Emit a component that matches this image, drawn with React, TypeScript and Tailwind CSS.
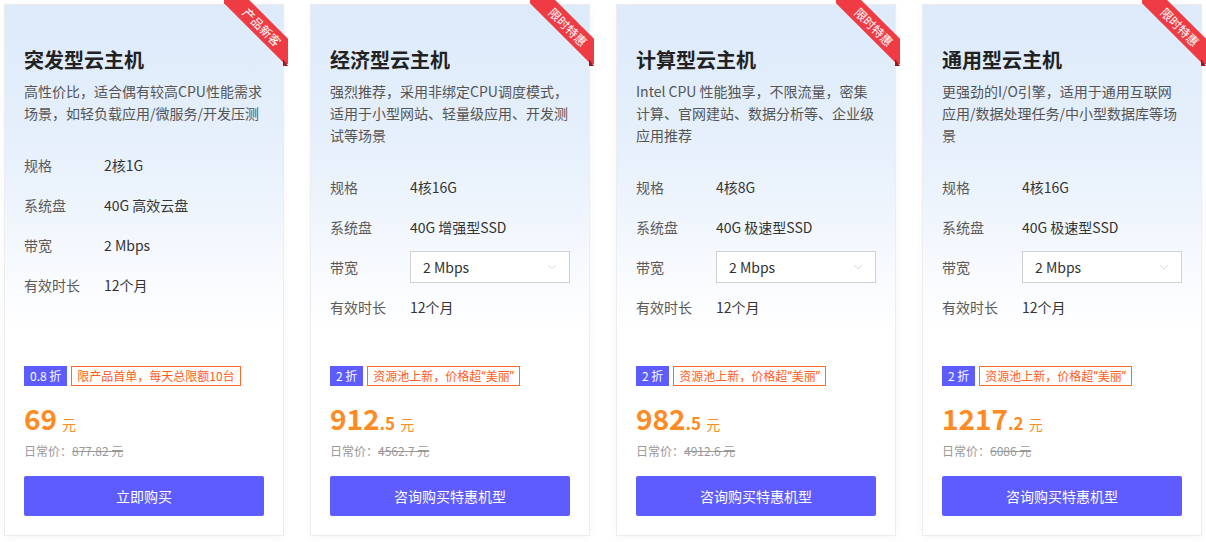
import React from "react";
import { ChevronDown } from "lucide-react";

type Card = {
  title: string;
  ribbon: string;
  desc: string[];
  spec: string;
  disk: string;
  select: boolean;
  discount: string;
  tag: React.ReactNode;
  priceInt: string;
  priceDec?: string;
  orig: string;
  btn: string;
};

const Q = ({ c }: { c: string }) => (
  <span style={{ fontFamily: '"Noto Sans", sans-serif' }}>{c}</span>
);

const poolTag = (
  <>
    资源池上新，价格超<Q c="“" />美丽<Q c="”" />
  </>
);

const cards: Card[] = [
  {
    title: "突发型云主机",
    ribbon: "产品新客",
    desc: ["高性价比，适合偶有较高CPU性能需求", "场景，如轻负载应用/微服务/开发压测"],
    spec: "2核1G",
    disk: "40G 高效云盘",
    select: false,
    discount: "0.8 折",
    tag: "限产品首单，每天总限额10台",
    priceInt: "69",
    orig: "877.82 元",
    btn: "立即购买",
  },
  {
    title: "经济型云主机",
    ribbon: "限时特惠",
    desc: ["强烈推荐，采用非绑定CPU调度模式，", "适用于小型网站、轻量级应用、开发测", "试等场景"],
    spec: "4核16G",
    disk: "40G 增强型SSD",
    select: true,
    discount: "2 折",
    tag: poolTag,
    priceInt: "912",
    priceDec: ".5",
    orig: "4562.7 元",
    btn: "咨询购买特惠机型",
  },
  {
    title: "计算型云主机",
    ribbon: "限时特惠",
    desc: ["Intel CPU 性能独享，不限流量，密集", "计算、官网建站、数据分析等、企业级", "应用推荐"],
    spec: "4核8G",
    disk: "40G 极速型SSD",
    select: true,
    discount: "2 折",
    tag: poolTag,
    priceInt: "982",
    priceDec: ".5",
    orig: "4912.6 元",
    btn: "咨询购买特惠机型",
  },
  {
    title: "通用型云主机",
    ribbon: "限时特惠",
    desc: ["更强劲的I/O引擎，适用于通用互联网", "应用/数据处理任务/中小型数据库等场", "景"],
    spec: "4核16G",
    disk: "40G 极速型SSD",
    select: true,
    discount: "2 折",
    tag: poolTag,
    priceInt: "1217",
    priceDec: ".2",
    orig: "6086 元",
    btn: "咨询购买特惠机型",
  },
];

function Row({ label, children }: { label: string; children: React.ReactNode }) {
  return (
    <div className="flex h-[40px] items-center">
      <div className="w-[80px] shrink-0 text-[14px] text-[#5a5a5a]">{label}</div>
      <div className="text-[14px] text-[#333]">{children}</div>
    </div>
  );
}

function Ribbon({ text }: { text: string }) {
  return (
    <>
      <div className="absolute right-[-5px] top-[-5px] h-[64px] w-[64px] overflow-hidden">
        <div className="absolute left-[-14px] top-[17px] flex h-[20px] w-[104px] rotate-45 items-center justify-center bg-[#ee3b44] text-[12px] leading-none text-white">
          {text}
        </div>
      </div>
      <div className="absolute right-[-5px] top-[54px] h-[7px] w-[5px] bg-[#a01a21] [clip-path:polygon(0_0,100%_100%,0_100%)]" />
    </>
  );
}

function PriceCard({ c }: { c: Card }) {
  return (
    <div className="relative flex h-[532px] w-[280px] shrink-0 flex-col border border-[#ededed] bg-[linear-gradient(180deg,#dceafa_0%,#e8f1fc_30%,#f6f9fe_48%,#ffffff_62%)] px-[19px] pt-[41px] pb-[19px] shadow-[0_2px_8px_rgba(0,0,0,0.04)]">
      <Ribbon text={c.ribbon} />
      <div className="text-[20px] font-bold leading-[28px] text-[#222]">{c.title}</div>
      <div className="mt-[6px] text-[14px] leading-[22px] text-[#555]">
        {c.desc.map((l, i) => (
          <div key={i} className="whitespace-nowrap">
            {l}
          </div>
        ))}
      </div>
      <div className="mt-[21px]">
        <Row label="规格">{c.spec}</Row>
        <Row label="系统盘">{c.disk}</Row>
        <Row label="带宽">
          {c.select ? (
            <div className="flex h-[32px] w-[160px] items-center justify-between border border-[#d0d0d0] bg-white pl-[12px] pr-[10px] text-[14px] text-[#333]">
              <span>2 Mbps</span>
              <ChevronDown size={14} strokeWidth={1.2} className="text-[#c0c0c0]" />
            </div>
          ) : (
            "2 Mbps"
          )}
        </Row>
        <Row label="有效时长">12个月</Row>
      </div>
      <div className="mt-auto">
        <div className="flex items-center gap-[4px]">
          <span className="flex h-[20px] items-center bg-[#5c5cff] px-[6px] text-[12px] text-white">{c.discount}</span>
          <span className="flex h-[20px] items-center border border-[#ff6a2b] px-[5px] text-[12px] text-[#ff5c20]">{c.tag}</span>
        </div>
        <div className="mt-[14px] flex h-[36px] items-baseline text-[#fd8a22]">
          <span className="text-[28px] font-bold leading-[36px]">{c.priceInt}</span>
          {c.priceDec && <span className="text-[17px] font-bold">{c.priceDec}</span>}
          <span className="ml-[5px] text-[14px]">元</span>
        </div>
        <div className="mt-[5px] h-[20px] text-[12px] leading-[20px] text-[#999]">
          日常价：<span className="line-through">{c.orig}</span>
        </div>
        <button className="mt-[15px] flex h-[40px] w-full items-center justify-center rounded-[2px] bg-[#5e5cff] text-[14px] text-white">
          {c.btn}
        </button>
      </div>
    </div>
  );
}

export default function App() {
  return (
    <div
      className="flex h-[542px] w-[1206px] gap-[26px] overflow-hidden bg-white px-[4px] pt-[4px]"
      style={{ fontFamily: '"Noto Sans CJK SC", "Noto Sans", sans-serif' }}
    >
      {cards.map((c, i) => (
        <PriceCard key={i} c={c} />
      ))}
    </div>
  );
}
